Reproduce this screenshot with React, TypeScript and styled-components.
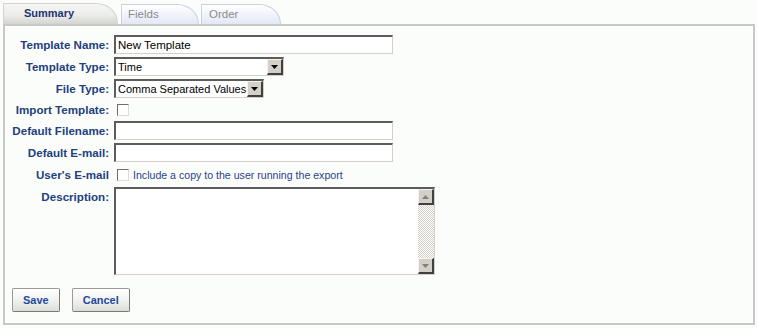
import React from 'react';
import styled, { createGlobalStyle } from 'styled-components';

const GlobalStyle = createGlobalStyle`
  html, body {
    margin: 0;
    padding: 0;
    background: #fbfdfa;
  }
  body {
    font-family: "Liberation Sans", Arial, sans-serif;
    font-size: 11px;
  }
`;

const Page = styled.div`
  padding: 3px 3px 0 3px;
`;

const TabStrip = styled.div`
  display: flex;
  align-items: flex-end;
  height: 21px;
`;

const Tab = styled.div<{ $active?: boolean; $width: number; $pad: number }>`
  box-sizing: border-box;
  width: ${p => p.$width}px;
  height: ${p => (p.$active ? 21 : 20)}px;
  margin-right: ${p => (p.$active ? 3 : 2)}px;
  padding-left: ${p => p.$pad}px;
  line-height: 19px;
  font-size: ${p => (p.$active ? 11 : 11.5)}px;
  font-weight: ${p => (p.$active ? 'bold' : 'normal')};
  color: ${p => (p.$active ? '#1c3670' : '#8a8a8a')};
  border: 1px solid ${p => (p.$active ? '#d4d4d0' : '#c8d0ea')};
  border-bottom: none;
  border-top-right-radius: 22px 20px;
  background: ${p =>
    p.$active
      ? 'linear-gradient(#f6f6f4, #ececea 55%, #d4d4d0)'
      : 'linear-gradient(#ffffff, #e3e8f6)'};
  cursor: default;
`;

const Panel = styled.div`
  box-sizing: border-box;
  height: 301px;
  border: 2px solid #c8c9c4;
  padding: 9px 0 0 0;
`;

const Form = styled.div`
  display: flex;
  flex-direction: column;
  gap: 3px;
`;

const Row = styled.div<{ $h: number; $top?: boolean }>`
  display: flex;
  align-items: ${p => (p.$top ? 'flex-start' : 'center')};
  height: ${p => p.$h}px;
  gap: 5px;
`;

const Label = styled.label`
  flex-shrink: 0;
  width: 104px;
  text-align: right;
  font-weight: bold;
  font-size: 11.6px;
  line-height: 19px;
  color: #22407e;
  white-space: nowrap;
`;

const TextInput = styled.input`
  box-sizing: border-box;
  width: 279px;
  height: 19px;
  margin: 0;
  padding: 0 2px;
  font-family: "Liberation Sans", Arial, sans-serif;
  font-size: 11.5px;
  color: #000;
  background: #fff;
  border-style: solid;
  border-width: 2px 1px 1px 2px;
  border-color: #5c5c5c #d4d0c8 #d4d0c8 #5c5c5c;
  outline: none;
`;

const SelectBox = styled.div<{ $width: number }>`
  box-sizing: border-box;
  display: flex;
  align-items: center;
  justify-content: space-between;
  width: ${p => p.$width}px;
  height: 19px;
  background: #fff;
  border-style: solid;
  border-width: 2px 1px 1px 2px;
  border-color: #5c5c5c #d4d0c8 #d4d0c8 #5c5c5c;
`;

const SelectText = styled.span`
  padding-left: 2px;
  font-size: 11px;
  color: #000;
  white-space: nowrap;
`;

const ArrowButton = styled.span`
  box-sizing: border-box;
  display: flex;
  align-items: center;
  justify-content: center;
  flex-shrink: 0;
  width: 16px;
  height: 16px;
  background: #d4d0c8;
  border-style: solid;
  border-width: 1px 2px 2px 1px;
  border-color: #f4f3f0 #404040 #404040 #f4f3f0;
`;

const Checkbox = styled.input`
  appearance: none;
  box-sizing: border-box;
  width: 12px;
  height: 12px;
  margin: 0 0 0 3px;
  background: #fff;
  border-style: solid;
  border-width: 1px;
  border-color: #6e6e6e #dcdcdc #dcdcdc #6e6e6e;
`;

const CheckNote = styled.span`
  margin-left: -1px;
  font-size: 10.6px;
  color: #2a3f8c;
  white-space: nowrap;
`;

const TextAreaBox = styled.div`
  box-sizing: border-box;
  display: flex;
  width: 321px;
  height: 88px;
  background: #fff;
  border-style: solid;
  border-width: 2px 1px 1px 2px;
  border-color: #5c5c5c #d4d0c8 #d4d0c8 #5c5c5c;
`;

const TextArea = styled.textarea`
  flex: 1;
  margin: 0;
  border: none;
  resize: none;
  outline: none;
  font-family: "Liberation Sans", Arial, sans-serif;
  font-size: 11px;
`;

const ScrollBar = styled.div`
  display: flex;
  flex-direction: column;
  width: 16px;
`;

const ScrollTrack = styled.div`
  flex: 1;
  background: repeating-conic-gradient(#d4d0c8 0 25%, #ffffff 0 50%) 0 0 / 2px 2px;
`;

const ScrollButton = styled(ArrowButton)`
  width: 16px;
  height: 16px;
`;

const ButtonRow = styled.div`
  display: flex;
  gap: 12px;
  margin-top: 13px;
  padding-left: 7px;
`;

const Button = styled.button`
  box-sizing: border-box;
  height: 24px;
  padding: 0 10px;
  font-family: "Liberation Sans", Arial, sans-serif;
  font-size: 11px;
  font-weight: bold;
  color: #1f4a9a;
  background: linear-gradient(#ffffff, #f2f2f0 50%, #dcdcd8);
  border: 1px solid #9a9a98;
  border-right-color: #7a7a78;
  border-bottom-color: #7a7a78;
  border-radius: 2px;
  cursor: pointer;
`;

const Triangle: React.FC<{ up?: boolean; color?: string }> = ({ up, color = '#000' }) => (
  <svg width="7" height="4" viewBox="0 0 7 4">
    <path d={up ? 'M3.5 0 L7 4 L0 4 Z' : 'M0 0 L7 0 L3.5 4 Z'} fill={color} />
  </svg>
);

const App: React.FC = () => {
  return (
    <Page>
      <GlobalStyle />
      <TabStrip>
        <Tab $active $width={115} $pad={20}>Summary</Tab>
        <Tab $width={78} $pad={6}>Fields</Tab>
        <Tab $width={80} $pad={7}>Order</Tab>
      </TabStrip>
      <Panel>
        <Form>
          <Row $h={19}>
            <Label>Template Name:</Label>
            <TextInput defaultValue="New Template" />
          </Row>
          <Row $h={19}>
            <Label>Template Type:</Label>
            <SelectBox $width={170}>
              <SelectText>Time</SelectText>
              <ArrowButton><Triangle /></ArrowButton>
            </SelectBox>
          </Row>
          <Row $h={19}>
            <Label>File Type:</Label>
            <SelectBox $width={150}>
              <SelectText>Comma Separated Values</SelectText>
              <ArrowButton><Triangle /></ArrowButton>
            </SelectBox>
          </Row>
          <Row $h={17}>
            <Label>Import Template:</Label>
            <Checkbox type="checkbox" />
          </Row>
          <Row $h={19}>
            <Label>Default Filename:</Label>
            <TextInput />
          </Row>
          <Row $h={19}>
            <Label>Default E-mail:</Label>
            <TextInput />
          </Row>
          <Row $h={19}>
            <Label>User's E-mail</Label>
            <Checkbox type="checkbox" />
            <CheckNote>Include a copy to the user running the export</CheckNote>
          </Row>
          <Row $h={88} $top>
            <Label>Description:</Label>
            <TextAreaBox>
              <TextArea />
              <ScrollBar>
                <ScrollButton><Triangle up color="#808080" /></ScrollButton>
                <ScrollTrack />
                <ScrollButton><Triangle color="#808080" /></ScrollButton>
              </ScrollBar>
            </TextAreaBox>
          </Row>
        </Form>
        <ButtonRow>
          <Button>Save</Button>
          <Button>Cancel</Button>
        </ButtonRow>
      </Panel>
    </Page>
  );
};

export default App;
